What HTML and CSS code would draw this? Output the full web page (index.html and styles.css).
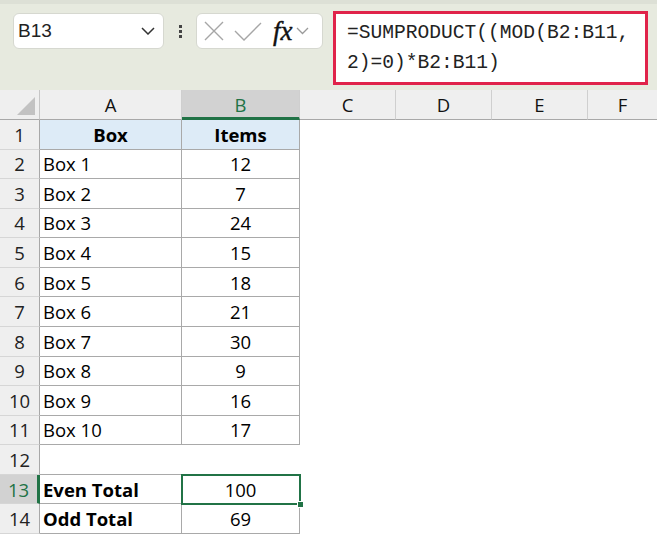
FILE: index.html
```html
<!DOCTYPE html>
<html lang="en">
<head>
  <meta charset="UTF-8" />
  <title>Even Total</title>
  <link rel="stylesheet" href="styles.css">
</head>
<body>
  <div class="toolbar">
    <div class="name-box">
      <span class="name-text">B13</span>
      <svg class="chev" width="14" height="8" viewBox="0 0 14 8"><path d="M1 1 L7 7 L13 1" fill="none" stroke="#333" stroke-width="1.5"/></svg>
    </div>
    <div class="dots"><i></i><i></i><i></i></div>
    <div class="fx-box">
      <svg width="22" height="22" viewBox="0 0 22 22"><path d="M2 2 L20 20 M20 2 L2 20" stroke="#a6a6a6" stroke-width="1.4" fill="none"/></svg>
      <svg width="28" height="22" viewBox="0 0 28 22"><path d="M1 11 L10 20 L27 3" stroke="#a6a6a6" stroke-width="1.4" fill="none"/></svg>
      <span class="fx">fx</span>
      <svg class="chev-s" width="13" height="8" viewBox="0 0 13 8"><path d="M1 1 L6.5 6.5 L12 1" fill="none" stroke="#9a9a9a" stroke-width="1.3"/></svg>
    </div>
    <div class="formula">=SUMPRODUCT((MOD(B2:B11,<br>2)=0)*B2:B11)</div>
  </div>

  <div class="sheet">
    <div class="corner"><span class="tri"></span></div>
    <div class="col-h">A</div>
    <div class="col-h sel">B</div>
    <div class="col-h">C</div>
    <div class="col-h">D</div>
    <div class="col-h">E</div>
    <div class="col-h last">F</div>

    <div class="row-h">1</div>
    <div class="c b head">Box</div><div class="c b head ctr">Items</div><div class="c e"></div><div class="c e"></div><div class="c e"></div><div class="c e"></div>

    <div class="row-h">2</div>
    <div class="c b">Box 1</div><div class="c b ctr">12</div><div class="c e"></div><div class="c e"></div><div class="c e"></div><div class="c e"></div>
    <div class="row-h">3</div>
    <div class="c b">Box 2</div><div class="c b ctr">7</div><div class="c e"></div><div class="c e"></div><div class="c e"></div><div class="c e"></div>
    <div class="row-h">4</div>
    <div class="c b">Box 3</div><div class="c b ctr">24</div><div class="c e"></div><div class="c e"></div><div class="c e"></div><div class="c e"></div>
    <div class="row-h">5</div>
    <div class="c b">Box 4</div><div class="c b ctr">15</div><div class="c e"></div><div class="c e"></div><div class="c e"></div><div class="c e"></div>
    <div class="row-h">6</div>
    <div class="c b">Box 5</div><div class="c b ctr">18</div><div class="c e"></div><div class="c e"></div><div class="c e"></div><div class="c e"></div>
    <div class="row-h">7</div>
    <div class="c b">Box 6</div><div class="c b ctr">21</div><div class="c e"></div><div class="c e"></div><div class="c e"></div><div class="c e"></div>
    <div class="row-h">8</div>
    <div class="c b">Box 7</div><div class="c b ctr">30</div><div class="c e"></div><div class="c e"></div><div class="c e"></div><div class="c e"></div>
    <div class="row-h">9</div>
    <div class="c b">Box 8</div><div class="c b ctr">9</div><div class="c e"></div><div class="c e"></div><div class="c e"></div><div class="c e"></div>
    <div class="row-h">10</div>
    <div class="c b">Box 9</div><div class="c b ctr">16</div><div class="c e"></div><div class="c e"></div><div class="c e"></div><div class="c e"></div>
    <div class="row-h">11</div>
    <div class="c b">Box 10</div><div class="c b ctr">17</div><div class="c e"></div><div class="c e"></div><div class="c e"></div><div class="c e"></div>
    <div class="row-h">12</div>
    <div class="c bb"></div><div class="c bb"></div><div class="c e"></div><div class="c e"></div><div class="c e"></div><div class="c e"></div>
    <div class="row-h sel">13</div>
    <div class="c b bold">Even Total</div><div class="c b ctr active">100<span class="handle"></span></div><div class="c e"></div><div class="c e"></div><div class="c e"></div><div class="c e"></div>
    <div class="row-h">14</div>
    <div class="c b bold">Odd Total</div><div class="c b ctr">69</div><div class="c e"></div><div class="c e"></div><div class="c e"></div><div class="c e"></div>
  </div>
</body>
</html>
```

FILE: styles.css
```css
*, *::before, *::after {
  box-sizing: border-box;
}

body {
  margin: 0;
  width: 657px;
  height: 534px;
  overflow: hidden;
  background: #fff;
  font-family: 'Open Sans', 'Liberation Sans', sans-serif;
}

.toolbar {
  height: 90px;
  background: #e7eadf;
  border-top: 4px solid #dde0d6;
  display: flex;
  align-items: flex-start;
  padding: 9px 0 0 13px;
}

.name-box {
  width: 151px;
  height: 36px;
  background: #fff;
  border: 1px solid #d6d8d0;
  border-radius: 6px;
  display: flex;
  align-items: center;
  justify-content: space-between;
  padding: 0 8px 0 4px;
}

.name-text {
  font-family: 'Liberation Sans', sans-serif;
  font-size: 19px;
  color: #222;
}

.dots {
  width: 32px;
  height: 36px;
  display: flex;
  flex-direction: column;
  align-items: center;
  justify-content: center;
  gap: 2px;
}

.dots i {
  width: 3px;
  height: 3px;
  background: #444;
}

.fx-box {
  width: 127px;
  height: 36px;
  background: #fff;
  border: 1px solid #d6d8d0;
  border-radius: 6px;
  display: flex;
  align-items: center;
  padding-left: 6px;
  gap: 9px;
}

.fx {
  font-family: 'Liberation Serif', serif;
  font-style: italic;
  font-size: 27px;
  color: #111;
  margin-left: 2px;
  line-height: 1;
  -webkit-text-stroke: 0.4px #111;
}

.chev-s {
  margin-left: -6px;
}

.formula {
  margin: -2px 0 0 10px;
  width: 315px;
  height: 74px;
  background: #fff;
  border: 3px solid #e0234a;
  padding: 4px 0 0 11px;
  font-family: 'Liberation Mono', monospace;
  font-size: 19.6px;
  line-height: 30px;
  color: #222;
}

.sheet {
  display: grid;
  grid-template-columns: 40px 142px 118px 96px 96px 96px 69px;
  grid-template-rows: 30px repeat(14, 29.57px);
}

.corner {
  background: #efefef;
  border-right: 1px solid #c6c6c6;
  border-bottom: 1px solid #a8a8a8;
  position: relative;
}

.tri {
  position: absolute;
  right: 4px;
  bottom: 4px;
  width: 0;
  height: 0;
  border-left: 18px solid transparent;
  border-bottom: 18px solid #c2c2c2;
}

.col-h {
  background: #efefef;
  border-right: 1px solid #cfcfcf;
  border-bottom: 1px solid #a8a8a8;
  display: flex;
  align-items: center;
  justify-content: center;
  font-size: 18.5px;
  color: #111;
}

.col-h.last {
  border-right: none;
}

.col-h.sel {
  background: #d2d2d2;
  color: #217346;
  border-bottom: 3px solid #217346;
  padding-top: 2px;
}

.row-h {
  background: #efefef;
  border-right: 1px solid #a8a8a8;
  border-bottom: 1px solid #d6d6d6;
  display: flex;
  align-items: center;
  justify-content: center;
  font-size: 18.5px;
  color: #222;
}

.row-h.sel {
  background: #d2d2d2;
  color: #217346;
  border-right: 3px solid #217346;
}

.c {
  display: flex;
  align-items: center;
  padding-left: 3px;
  font-size: 18.5px;
  color: #000;
  white-space: nowrap;
}

.b {
  border-right: 1px solid #a9a9a9;
  border-bottom: 1px solid #a9a9a9;
}

.bb {
  border-bottom: 1px solid #a9a9a9;
}

.ctr {
  justify-content: center;
  padding-left: 0;
}

.head {
  background: #ddebf7;
  font-weight: 700;
  justify-content: center;
  padding-left: 0;
}

.bold {
  font-weight: 700;
}

.active {
  position: relative;
  outline: 2px solid #217346;
  outline-offset: -1px;
  z-index: 1;
}

.handle {
  position: absolute;
  right: -5px;
  bottom: -5px;
  width: 7px;
  height: 7px;
  background: #217346;
  border: 1px solid #fff;
}
```
